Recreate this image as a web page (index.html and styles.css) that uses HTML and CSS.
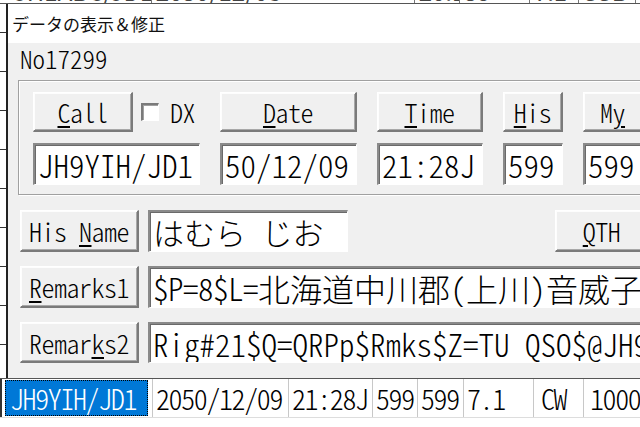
FILE: index.html
```
<!DOCTYPE html>
<html lang="ja">
<head>
<meta charset="utf-8">
<title>データの表示＆修正</title>
<link rel="stylesheet" href="styles.css">
</head>
<body>
<div class="screen">
  <div class="topstrip">
    <div class="tcell t1"><span>JH1ABC/JD1</span></div>
    <div class="tcell t2"><span>2050/12/08</span></div>
    <div class="tcell t3"><span>20:15J</span></div>
    <div class="tcell t4"><span>59</span></div>
    <div class="tcell t5"><span>7.1</span></div>
    <div class="tcell t6"><span>SSB</span></div>
    <div class="tcell t7"><span>1000</span></div>
  </div>
  <div class="middle">
    <div class="leftstrip"></div>
    <div class="dialog">
      <div class="titlebar">データの表示＆修正</div>
      <div class="body">
        <div class="number mono">No17299</div>
        <div class="group">
          <div class="col col-call">
            <div class="callrow">
              <div class="btn btn-call mono"><u>C</u>all</div>
              <span class="check"></span>
              <span class="dx mono">DX</span>
            </div>
            <div class="field mono">JH9YIH/JD1</div>
          </div>
          <div class="col col-date">
            <div class="btn mono"><u>D</u>ate</div>
            <div class="field mono">50/12/09</div>
          </div>
          <div class="col col-time">
            <div class="btn mono"><u>T</u>ime</div>
            <div class="field mono">21:28J</div>
          </div>
          <div class="col col-his">
            <div class="btn mono"><u>H</u>is</div>
            <div class="field mono">599</div>
          </div>
          <div class="col col-my">
            <div class="btn mono">M<u>y</u></div>
            <div class="field mono">599</div>
          </div>
        </div>
        <div class="rows">
          <div class="row">
            <div class="btn btn-side mono">His&ensp;<u>N</u>ame</div>
            <div class="field field-side field-name mono">はむら&ensp;じお</div>
            <div class="btn btn-qth mono"><u>Q</u>TH</div>
          </div>
          <div class="row">
            <div class="btn btn-side mono"><u>R</u>emarks1</div>
            <div class="field field-side field-wide r1 mono"><span class="h">$</span><span class="h">P</span><span class="h">=</span><span class="h">8</span><span class="h">$</span><span class="h">L</span><span class="h">=</span><span class="kj">北海道中川郡(上川)音威子府村</span></div>
          </div>
          <div class="row row-last">
            <div class="btn btn-side mono">Remar<u>k</u>s2</div>
            <div class="field field-side field-wide mono"><span class="h">R</span><span class="h">i</span><span class="h">g</span><span class="h">#</span><span class="h">2</span><span class="h">1</span><span class="h">$</span><span class="h">Q</span><span class="h">=</span><span class="h">Q</span><span class="h">R</span><span class="h">P</span><span class="h">p</span><span class="h">$</span><span class="h">R</span><span class="h">m</span><span class="h">k</span><span class="h">s</span><span class="h">$</span><span class="h">Z</span><span class="h">=</span><span class="h">T</span><span class="h">U</span><span class="h">&nbsp;</span><span class="h">Q</span><span class="h">S</span><span class="h">O</span><span class="h">$</span><span class="h">@</span><span class="h">J</span><span class="h">H</span><span class="h">9</span><span class="h">Y</span><span class="h">I</span><span class="h">H</span></div>
          </div>
        </div>
      </div>
    </div>
  </div>
  <div class="gridrow mono">
    <div class="gstrip"></div>
    <div class="gcell sel">JH9YIH/JD1</div>
    <div class="gcell g2">2050/12/09</div>
    <div class="gcell g3">21:28J</div>
    <div class="gcell g4">599</div>
    <div class="gcell g5">599</div>
    <div class="gcell g6">7.1</div>
    <div class="gcell g7">CW</div>
    <div class="gcell g8">1000</div>
  </div>
</div>
</body>
</html>
```
FILE: styles.css
```
* { box-sizing: border-box; }

body {
  margin: 0;
  width: 640px;
  height: 427px;
  overflow: hidden;
  background: #fff;
  color: #000;
  font-family: "Noto Sans CJK JP", sans-serif;
}

.mono {
  font-feature-settings: "hwid" 1;
  font-weight: 300;
}
.h {
  display: inline-block;
  width: 15.5px;
  text-align: center;
}
.r1 .h { width: 15px; }
.kj { font-size: 32px; }

.screen {
  display: flex;
  flex-direction: column;
  height: 427px;
}

/* background list row peeking above the dialog */
.topstrip {
  flex: none;
  height: 4px;
  display: flex;
  overflow: hidden;
  border-bottom: 1px solid #555;
  background: #fff;
  font-size: 24px;
  line-height: 24px;
}
.tcell {
  border-left: 1px solid #777;
  padding-left: 4px;
  white-space: nowrap;
  overflow: hidden;
}
.tcell span { display: block; margin-top: -21px; color: #444; }
.t1 { width: 152px; border-left: none; padding-left: 14px; }
.t2 { width: 265px; }
.t3 { width: 46px; }
.t4 { width: 70px; }
.t5 { width: 50px; }
.t6 { width: 57px; }
.t7 { flex: 1; }

.middle {
  flex: none;
  height: 374px;
  display: flex;
}
.leftstrip {
  width: 6px;
  flex: none;
  background-color: #fff;
  background-image: linear-gradient(to bottom, #333 0, #333 1px, transparent 1px);
  background-size: 6px 39px;
  background-position: 0 28px;
}

.dialog {
  flex: 1;
  min-width: 0;
  border-left: 2px solid #222;
  display: flex;
  flex-direction: column;
  overflow: hidden;
}
.titlebar {
  flex: none;
  height: 39px;
  background: #fff;
  font-size: 17px;
  line-height: 39px;
  padding-left: 4px;
  color: #111;
}
.body {
  flex: 1;
  background: #f0f0f0;
  padding-left: 12px;
}
.number {
  height: 37px;
  font-size: 25px;
  line-height: 28px;
  padding-top: 1px;
}

.group {
  margin-left: -2px;
  width: 700px;
  height: 115px;
  border: 1px solid #a0a0a0;
  box-shadow: inset 1px 1px #fff, 1px 1px #fff;
  padding: 11px 0 0 14px;
  display: flex;
  gap: 20px;
}
.col {
  flex: none;
  display: flex;
  flex-direction: column;
  gap: 11px;
}
.col-call { width: 167px; }
.col-date { width: 137px; }
.col-time { width: 106px; }
.col-his { width: 60px; }
.col-my { width: 60px; }

.callrow {
  display: flex;
  align-items: center;
}

.btn {
  flex: none;
  height: 40px;
  display: flex;
  align-items: center;
  justify-content: center;
  font-size: 26px;
  background: #f0f0f0;
  border-style: solid;
  border-width: 1px 2px 2px 1px;
  border-color: #fff #7a7a7a #7a7a7a #fff;
  box-shadow: inset 1px 1px #fdfdfd, inset -1px -1px #a8a8a8;
  white-space: nowrap;
  letter-spacing: -0.5px;
}
.btn u { text-underline-offset: 3px; text-decoration-thickness: 2px; }
.btn-call { width: 100px; }

.check {
  flex: none;
  width: 18px;
  height: 18px;
  margin-left: 8px;
  background: #fff;
  border-style: solid;
  border-width: 2px 1px 1px 2px;
  border-color: #7a7a7a #fff #fff #7a7a7a;
  box-shadow: inset 1px 1px #a0a0a0;
}
.dx {
  margin-left: 11px;
  font-size: 26px;
  letter-spacing: -0.5px;
  line-height: 30px;
}

.field {
  flex: none;
  height: 42px;
  display: flex;
  align-items: center;
  padding-left: 3px;
  font-size: 31px;
  background: #fff;
  border-style: solid;
  border-width: 2px 1px 1px 2px;
  border-color: #8a8a8a #fff #fff #8a8a8a;
  box-shadow: inset 1px 1px #6a6a6a;
  white-space: nowrap;
  overflow: hidden;
}

.rows {
  margin-top: 15px;
  display: flex;
  flex-direction: column;
  gap: 14px;
}
.row {
  display: flex;
  height: 42px;
}
.row-last { height: 41px; }
.row .btn, .row .field { height: 100%; }
.btn-side { width: 119px; }
.field-side { margin-left: 9px; }
.field-name { width: 200px; }
.field-wide { width: 620px; }
.btn-qth { width: 94px; margin-left: 207px; }

/* list row below the dialog */
.gridrow {
  flex: none;
  height: 40px;
  display: flex;
  border-top: 1px solid #555;
  border-bottom: 1px solid #ddd;
  font-size: 28px;
  letter-spacing: -1.4px;
  background: #fff;
}
.gstrip {
  width: 5px;
  flex: none;
  border-left: 2px solid #333;
}
.gcell {
  flex: none;
  display: flex;
  align-items: center;
  padding-left: 3px;
  border-left: 1px solid #c8c8c8;
  white-space: nowrap;
  overflow: hidden;
}
.gcell.sel {
  width: 143px;
  margin: 1px 4px 1px 0;
  background: #0078d7;
  color: #fff;
  border-left: none;
  outline: 1px dotted #000;
  outline-offset: -1px;
  padding-left: 5px;
}
.g2 { width: 136px; }
.g3 { width: 84px; }
.g4 { width: 45px; }
.g5 { width: 46px; }
.g6 { width: 70px; }
.g7 { width: 50px; padding-left: 7px; }
.g8 { flex: 1; padding-left: 6px; }
```
